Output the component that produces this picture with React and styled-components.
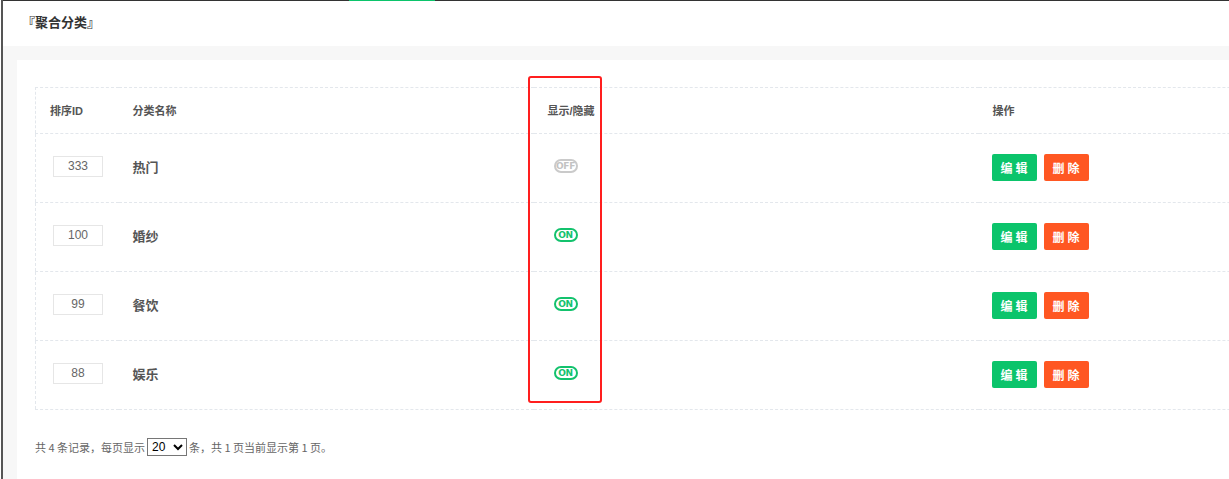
import styled, { createGlobalStyle } from "styled-components";

const GlobalStyle = createGlobalStyle`
  html, body {
    margin: 0;
    padding: 0;
    background: #fff;
    overflow: hidden;
    font-family: "Liberation Sans", "Noto Sans CJK SC", sans-serif;
  }
`;

const rows = [
  { id: 333, name: "热门", show: false },
  { id: 100, name: "婚纱", show: true },
  { id: 99, name: "餐饮", show: true },
  { id: 88, name: "娱乐", show: true },
];

const Frame = styled.div`
  margin-left: 1px;
  border-left: 2px solid #555;
  height: 479px;
  width: 1300px;
  background: #fff;
`;

const TopLine = styled.div`
  height: 1px;
  background: #333;
  display: flex;
`;

const Indicator = styled.div`
  margin-left: 346px;
  width: 86px;
  height: 1px;
  background: #0bc46b;
`;

const Header = styled.div`
  height: 45px;
  line-height: 42px;
  padding-left: 19px;
  font-size: 13px;
  font-weight: bold;
  color: #333;
  font-family: "Noto Sans CJK SC", sans-serif;
`;

const Body = styled.div`
  background: #f7f7f7;
  padding: 14px 0 0 14px;
  height: 420px;
`;

const Card = styled.div`
  position: relative;
  background: #fff;
  height: 100%;
  padding: 27px 0 0 18px;
  box-sizing: border-box;
`;

const Table = styled.table`
  border-collapse: collapse;
  width: 1260px;
  table-layout: fixed;
  border: 1px dashed #e3e7ec;
  color: #555;
`;

const Th = styled.th`
  height: 43px;
  text-align: left;
  font-size: 11px;
  font-weight: bold;
  color: #555;
  padding: 0 0 2px 14px;
  border-bottom: 1px dashed #e3e7ec;
`;

const Td = styled.td`
  height: 65px;
  padding: 0 0 3px 14px;
  border-bottom: 1px dashed #e3e7ec;
  vertical-align: middle;
`;

const SortInput = styled.div`
  width: 48px;
  height: 19px;
  margin-left: 3px;
  border: 1px solid #e6e6e6;
  text-align: center;
  line-height: 19px;
  font-size: 12px;
  color: #666;
`;

const Name = styled.span`
  font-size: 13px;
  font-weight: bold;
  color: #555;
`;

const Toggle = styled.div`
  display: flex;
  align-items: center;
  justify-content: center;
  margin: -1px 0 0 6px;
  width: 20px;
  height: 10px;
  border: 2px solid ${(p) => (p.$on ? "#13c26d" : "#cacaca")};
  border-radius: 8px;
  font-size: 9px;
  font-weight: bold;
  color: ${(p) => (p.$on ? "#13c26d" : "#c2c2c2")};
  font-family: "DejaVu Sans", sans-serif;
  letter-spacing: -0.3px;
`;

const Actions = styled.div`
  display: flex;
  gap: 7px;
  margin: 2px 0 0 -1px;
`;

const Button = styled.button`
  width: 45px;
  height: 27px;
  border: none;
  border-radius: 2px;
  background: ${(p) => (p.$danger ? "#ff5722" : "#0bc46b")};
  color: #fff;
  font-size: 12px;
  font-weight: bold;
  letter-spacing: 3px;
  padding: 0 0 0 3px;
  font-family: "Noto Sans CJK SC", sans-serif;
`;

const Footer = styled.div`
  display: flex;
  align-items: center;
  gap: 2px;
  padding-top: 28px;
  font-size: 11px;
  color: #666;
  font-family: "Noto Sans CJK SC", sans-serif;
`;

const PageSize = styled.select`
  width: 40px;
  height: 18px;
  font-size: 12px;
  border: 1px solid #767676;
  padding: 0;
  color: #000;
  background: #fff;
  font-family: "Liberation Sans", sans-serif;
`;

const Highlight = styled.div`
  position: absolute;
  left: 511px;
  top: 16px;
  width: 70px;
  height: 323px;
  border: 2.5px solid #ff1e1e;
  border-radius: 3px;
  pointer-events: none;
`;

export default function App() {
  return (
    <>
      <GlobalStyle />
      <Frame>
        <TopLine>
          <Indicator />
        </TopLine>
        <Header>『聚合分类』</Header>
        <Body>
          <Card>
            <Table>
              <colgroup>
                <col style={{ width: 83 }} />
                <col style={{ width: 415 }} />
                <col style={{ width: 445 }} />
                <col />
              </colgroup>
              <thead>
                <tr>
                  <Th>排序ID</Th>
                  <Th>分类名称</Th>
                  <Th>显示/隐藏</Th>
                  <Th>操作</Th>
                </tr>
              </thead>
              <tbody>
                {rows.map((r) => (
                  <tr key={r.id}>
                    <Td>
                      <SortInput>{r.id}</SortInput>
                    </Td>
                    <Td>
                      <Name>{r.name}</Name>
                    </Td>
                    <Td>
                      <Toggle $on={r.show}>{r.show ? "ON" : "OFF"}</Toggle>
                    </Td>
                    <Td>
                      <Actions>
                        <Button>编辑</Button>
                        <Button $danger>删除</Button>
                      </Actions>
                    </Td>
                  </tr>
                ))}
              </tbody>
            </Table>
            <Footer>
              <span>共 4 条记录，每页显示</span>
              <PageSize defaultValue="20">
                <option>10</option>
                <option>20</option>
                <option>50</option>
              </PageSize>
              <span>条，共 1 页当前显示第 1 页。</span>
            </Footer>
            <Highlight />
          </Card>
        </Body>
      </Frame>
    </>
  );
}
